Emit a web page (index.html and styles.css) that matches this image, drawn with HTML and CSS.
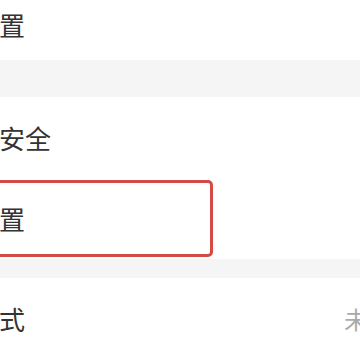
FILE: index.html
```html
<!DOCTYPE html>
<html lang="zh-CN">
<head>
<meta charset="utf-8">
<link rel="stylesheet" href="styles.css">
</head>
<body>
<div class="page">
  <div class="row row-top"><span class="label">置</span></div>
  <div class="band band-a"></div>
  <div class="row"><span class="label">安全</span></div>
  <div class="row"><span class="label">置</span></div>
  <div class="band band-b"></div>
  <div class="row"><span class="label">式</span><span class="value">未开启</span></div>
  <div class="highlight"></div>
</div>
</body>
</html>
```
FILE: styles.css
```css
html, body {
  margin: 0;
  padding: 0;
  background: #ffffff;
  overflow: hidden;
}
.page {
  position: relative;
  width: 360px;
  height: 360px;
  overflow: hidden;
  font-family: "Noto Sans CJK SC", "Noto Sans", sans-serif;
  color: #333333;
}
.row {
  display: flex;
  align-items: center;
  height: 81px;
  white-space: nowrap;
  overflow: hidden;
  background: #ffffff;
}
.row-top {
  height: 50px;
  padding-bottom: 10px;
}
.label {
  font-size: 26px;
  line-height: 26px;
  margin-left: -1px;
}
.value {
  margin-left: auto;
  margin-right: -56px;
  font-size: 24px;
  line-height: 24px;
  color: #aaaaaa;
}
.band {
  background: #f5f5f5;
}
.band-a { height: 37px; }
.band-b { height: 19px; }
.highlight {
  position: absolute;
  left: -10px;
  top: 180px;
  width: 217px;
  height: 71px;
  border: 3px solid #d44b45;
  border-radius: 5px;
}
```
